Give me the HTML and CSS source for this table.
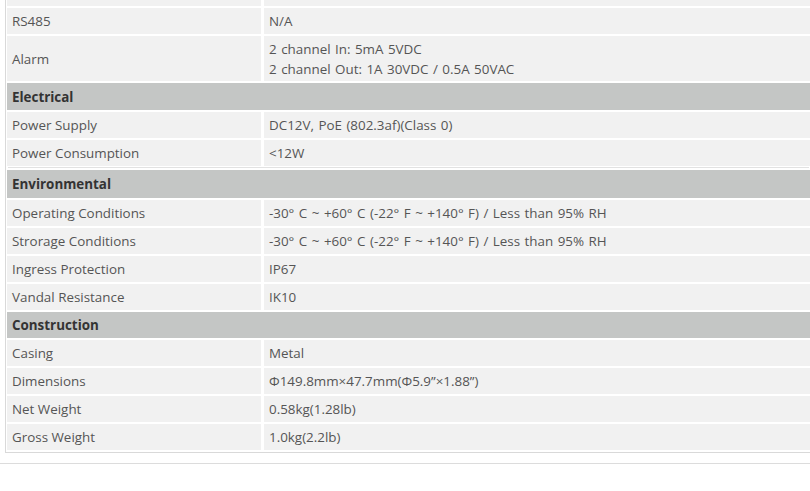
FILE: index.html
```html
<!DOCTYPE html>
<html>
<head>
<meta charset="utf-8">
<link rel="stylesheet" href="styles.css">
</head>
<body>
<div class="page">
  <div class="spec">
    <div class="row"><div class="k">&nbsp;</div><div class="v">&nbsp;</div></div>
    <div class="row"><div class="k">RS485</div><div class="v">N/A</div></div>
    <div class="row tall"><div class="k">Alarm</div><div class="v">2 channel In: 5mA 5VDC<br>2 channel Out: 1A 30VDC / 0.5A 50VAC</div></div>
    <div class="head h-elec">Electrical</div>
    <div class="row"><div class="k">Power Supply</div><div class="v">DC12V, PoE (802.3af)(Class 0)</div></div>
    <div class="row"><div class="k">Power Consumption</div><div class="v">&lt;12W</div></div>
    <div class="head h-env">Environmental</div>
    <div class="row"><div class="k">Operating Conditions</div><div class="v">-30° C ~ +60° C (-22° F ~ +140° F) / Less than 95% RH</div></div>
    <div class="row"><div class="k">Strorage Conditions</div><div class="v">-30° C ~ +60° C (-22° F ~ +140° F) / Less than 95% RH</div></div>
    <div class="row"><div class="k">Ingress Protection</div><div class="v">IP67</div></div>
    <div class="row"><div class="k">Vandal Resistance</div><div class="v">IK10</div></div>
    <div class="head h-cons">Construction</div>
    <div class="row"><div class="k">Casing</div><div class="v">Metal</div></div>
    <div class="row"><div class="k">Dimensions</div><div class="v">Φ149.8mm×47.7mm(Φ5.9”×1.88”)</div></div>
    <div class="row"><div class="k">Net Weight</div><div class="v">0.58kg(1.28lb)</div></div>
    <div class="row"><div class="k">Gross Weight</div><div class="v">1.0kg(2.2lb)</div></div>
  </div>
  <div class="rule"></div>
</div>
</body>
</html>
```

FILE: styles.css
```css
html, body {
  margin: 0;
  padding: 0;
  background: #ffffff;
  overflow: hidden;
}
.page {
  font-family: "Open Sans", "Noto Sans", sans-serif;
  font-size: 13.4px;
  color: #555555;
}
.spec {
  margin: -20px 0 0 5px;
  padding: 0 0 2px 1px;
  border-left: 1px solid #d9d9d9;
  border-bottom: 1px solid #d9d9d9;
  display: flex;
  flex-direction: column;
  gap: 2px;
}
.row {
  display: flex;
  gap: 3px;
}
.k, .v {
  background: #f1f1f1;
  padding: 3px 5px;
  line-height: 20px;
  white-space: nowrap;
}
.k {
  width: 244px;
  flex: none;
}
.v {
  flex: 1;
  word-spacing: 1px;
}
.tall .k {
  display: flex;
  align-items: center;
}
.tall .k, .tall .v {
  padding-top: 3px;
  padding-bottom: 2px;
}
.head {
  background: #c4c6c5;
  color: #333333;
  font-weight: 700;
  line-height: 20px;
  padding: 3px 5px;
}
.h-elec {
  padding-top: 4px;
  padding-bottom: 3px;
}
.h-env {
  margin-top: 2px;
  padding-top: 4px;
  padding-bottom: 4px;
  box-shadow: 0 -3px 0 -1px #ffffff, 0 -4px 0 -1px #e2e2e2;
}
.rule {
  height: 1px;
  background: #dcdcdc;
  margin-top: 10px;
}
```
